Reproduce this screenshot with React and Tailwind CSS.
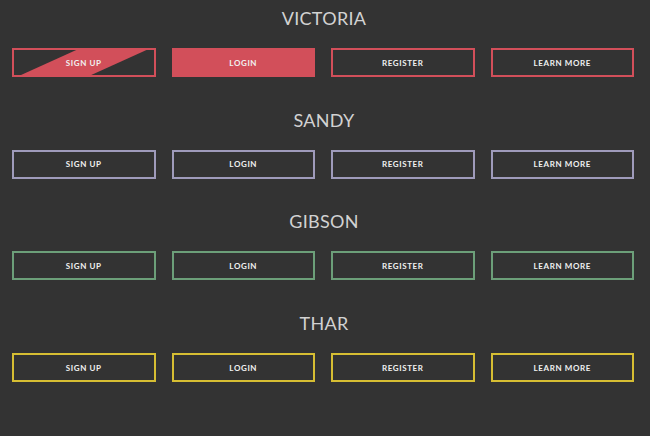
import React from "react";

const groups = [
  { name: "VICTORIA", border: "border-[#d24f5a]", theme: "victoria" },
  { name: "SANDY", border: "border-[#9f9bbb]", theme: "sandy" },
  { name: "GIBSON", border: "border-[#6c9f79]", theme: "gibson" },
  { name: "THAR", border: "border-[#d6be33]", theme: "thar" },
];

const labels = ["SIGN UP", "LOGIN", "REGISTER", "LEARN MORE"];

function Button({ label, border, theme, index }) {
  const filled = theme === "victoria" && index === 1;
  const striped = theme === "victoria" && index === 0;

  return (
    <div
      className={`relative h-[29px] border-2 ${border} ${
        filled ? "bg-[#d24f5a]" : ""
      } flex items-center justify-center overflow-hidden`}
    >
      {striped && (
        <svg
          className="absolute inset-0 w-full h-full"
          viewBox="0 0 139 25"
          preserveAspectRatio="none"
        >
          <polygon points="62,0 132,0 77,25 7,25" fill="#d24f5a" />
        </svg>
      )}
      <span className="relative text-[8px] font-bold tracking-[0.6px] text-[#f1f1f1]">
        {label}
      </span>
    </div>
  );
}

export default function App() {
  return (
    <div
      className="w-[650px] h-[436px] bg-[#333333] pl-[12px] pr-[16px] pt-[6px]"
      style={{ fontFamily: "Lato, 'Open Sans', sans-serif" }}
    >
      <div className="flex flex-col gap-[30.7px]">
        {groups.map((g) => (
          <section key={g.name}>
            <h2 className="text-center text-[18px] leading-[24px] font-normal tracking-[0.3px] text-[#d2d2d2] pl-[2px]">
              {g.name}
            </h2>
            <div className="grid grid-cols-4 gap-x-[16px] mt-[18px]">
              {labels.map((label, i) => (
                <Button
                  key={label}
                  label={label}
                  border={g.border}
                  theme={g.theme}
                  index={i}
                />
              ))}
            </div>
          </section>
        ))}
      </div>
    </div>
  );
}
